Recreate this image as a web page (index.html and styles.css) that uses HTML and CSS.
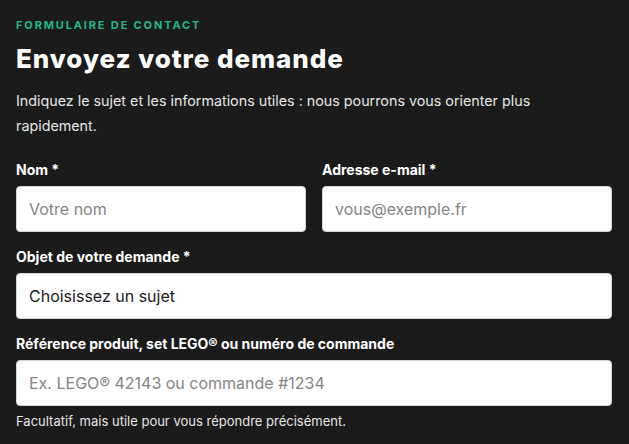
FILE: index.html
```html
<!DOCTYPE html>
<html lang="fr">
<head>
	<meta charset="UTF-8">
	<title>Contact</title>
	<link rel="stylesheet" href="styles.css">
</head>
<body>
	<div class="contact">
		<p class="eyebrow">Formulaire de contact</p>
		<h1>Envoyez votre demande</h1>
		<p class="intro">Indiquez le sujet et les informations utiles : nous pourrons vous orienter plus rapidement.</p>

		<form class="form">
			<div class="row">
				<div class="field">
					<label for="nom">Nom *</label>
					<input id="nom" type="text" placeholder="Votre nom">
				</div>
				<div class="field">
					<label for="mail">Adresse e-mail *</label>
					<input id="mail" type="email" placeholder="vous@exemple.fr">
				</div>
			</div>
			<div class="field">
				<label for="objet">Objet de votre demande *</label>
				<div class="select">Choisissez un sujet</div>
			</div>
			<div class="field">
				<label for="ref">Référence produit, set LEGO® ou numéro de commande</label>
				<input id="ref" type="text" placeholder="Ex. LEGO® 42143 ou commande #1234">
				<span class="hint">Facultatif, mais utile pour vous répondre précisément.</span>
			</div>
		</form>
	</div>
</body>
</html>
```

FILE: styles.css
```css
html,body{
	margin:0;padding:0;background:#1b1b1b;
	font-family:Inter,"Noto Sans",sans-serif;color:#fff;
}
.contact{
	padding:17px 17px 0 16px;
}
.eyebrow{
	margin:0;
	font-size:11px;font-weight:700;letter-spacing:1.85px;text-transform:uppercase;
	color:#22b889;line-height:16px;
}
h1{
	margin:9px 0 0;
	font-size:26px;font-weight:800;line-height:34px;letter-spacing:0.95px;
}
.intro{
	margin:12px 0 0;max-width:545px;
	font-size:14.3px;line-height:25px;color:#e6e6e6;
}
.form{
	margin-top:23px;
	display:flex;flex-direction:column;gap:16px;
}
.row{
	display:grid;grid-template-columns:1fr 1fr;gap:16px;
}
.field{
	display:flex;flex-direction:column;
}
.field label{
	font-size:14px;font-weight:700;line-height:18px;margin-bottom:7px;
}
.field input,.select{
	box-sizing:border-box;height:46px;width:100%;
	border:1px solid #d4d4d4;border-radius:4px;background:#fff;
	padding:0 12px;
	font-family:Inter,"Noto Sans",sans-serif;font-size:16px;color:#1b1b1b;
	outline:none;
}
.field input::placeholder{
	color:#858585;
}
.select{
	display:flex;align-items:center;
}
.hint{
	margin-top:7px;
	font-size:13px;line-height:16px;color:#e6e6e6;
}
```
